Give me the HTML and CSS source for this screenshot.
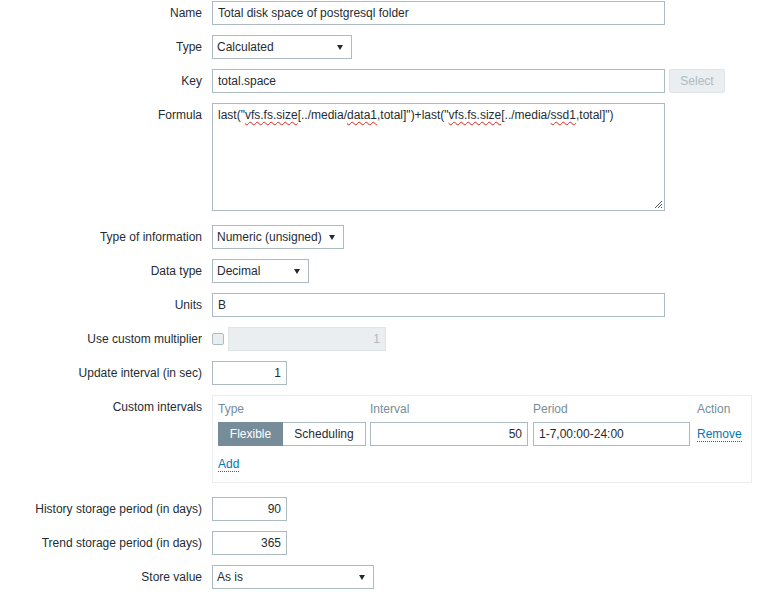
FILE: index.html
```html
<!DOCTYPE html>
<html lang="en">
<head>
    <meta charset="UTF-8">
    <title>Item</title>
    <link rel="stylesheet" href="styles.css">
</head>
<body>

  <form class="item-form">
      <label class="label">Name</label>
      <div class="field"><input class="text wide" type="text" value="Total disk space of postgresql folder"></div>

      <label class="label">Type</label>
      <div class="field"><div class="select w-type">Calculated</div></div>

      <label class="label">Key</label>
      <div class="field">
          <input class="text wide" type="text" value="total.space">
          <button type="button" class="btn-disabled">Select</button>
      </div>

      <label class="label">Formula</label>
      <div class="field tall">
          <div class="textarea">last("<span class="typo">vfs.fs.size</span>[../media/<span class="typo">data1</span>,total]")+last("<span class="typo">vfs.fs.size</span>[../media/<span class="typo">ssd1</span>,total]")
              <svg class="grip" width="9" height="9" viewBox="0 0 9 9"><path d="M8 1L1 8M8 4L4 8M8 7L7 8" stroke="#555" stroke-width="1"/></svg>
          </div>
      </div>

      <label class="label">Type of information</label>
      <div class="field"><div class="select w-info">Numeric (unsigned)</div></div>

      <label class="label">Data type</label>
      <div class="field"><div class="select w-data">Decimal</div></div>

      <label class="label">Units</label>
      <div class="field"><input class="text wide" type="text" value="B"></div>

      <label class="label">Use custom multiplier</label>
      <div class="field">
          <span class="checkbox"></span>
          <input class="text num w-mult" type="text" value="1" disabled>
      </div>

      <label class="label">Update interval (in sec)</label>
      <div class="field"><input class="text num w-short" type="text" value="1"></div>

      <label class="label">Custom intervals</label>
      <div class="field boxed">
          <div class="intervals">
              <div class="intervals-grid">
                  <div class="th">Type</div>
                  <div class="th">Interval</div>
                  <div class="th">Period</div>
                  <div class="th">Action</div>

                  <div class="seg">
                      <span class="seg-on">Flexible</span>
                      <span class="seg-off">Scheduling</span>
                  </div>
                  <div><input class="text num w-interval" type="text" value="50"></div>
                  <div><input class="text w-period" type="text" value="1-7,00:00-24:00"></div>
                  <div><a class="link" href="#">Remove</a></div>
              </div>
              <a class="link add" href="#">Add</a>
          </div>
      </div>

      <label class="label">History storage period (in days)</label>
      <div class="field"><input class="text num w-short" type="text" value="90"></div>

      <label class="label">Trend storage period (in days)</label>
      <div class="field"><input class="text num w-short" type="text" value="365"></div>

      <label class="label">Store value</label>
      <div class="field"><div class="select w-store">As is</div></div>
  </form>

</body>
</html>
```

FILE: styles.css
```css
body {
    margin: 0;
    background: #fff;
    color: #1f2c33;
    font-family: "Liberation Sans", Arial, sans-serif;
    font-size: 12px;
}

.item-form {
    display: grid;
    grid-template-columns: 202px 1fr;
    column-gap: 10px;
    row-gap: 10px;
    padding-top: 1px;
}

.label {
    text-align: right;
    line-height: 24px;
    align-self: start;
}

.field {
    display: flex;
    align-items: center;
    gap: 4px;
}

.field.tall,
.field.boxed {
    margin-bottom: 4px;
}

.text {
    box-sizing: border-box;
    height: 24px;
    padding: 0 5px;
    border: 1px solid #acbbc2;
    background: #fff;
    color: #1f2c33;
    font-family: inherit;
    font-size: 12px;
    outline: none;
}

.wide { width: 453px; }
.num { text-align: right; }
.w-short { width: 75px; }
.w-mult { width: 158px; }
.w-interval { width: 158px; }
.w-period { width: 157px; }

.text:disabled {
    background: #ebeef0;
    border-color: #dfe4e7;
    color: #acbbc2;
}

.btn-disabled {
    box-sizing: border-box;
    height: 24px;
    width: 56px;
    padding: 0;
    border: 1px solid #dfe4e7;
    border-radius: 2px;
    background: #ebeef0;
    color: #acbbc2;
    font-family: inherit;
    font-size: 12px;
}

.select {
    position: relative;
    box-sizing: border-box;
    height: 24px;
    line-height: 22px;
    padding: 0 4px;
    border: 1px solid #acbbc2;
    background: #fff;
}

    .select::after {
        content: "";
        position: absolute;
        right: 8px;
        top: 9px;
        border-left: 3px solid transparent;
        border-right: 3px solid transparent;
        border-top: 5px solid #1f2c33;
    }

.w-type { width: 140px; }
.w-info { width: 132px; }
.w-data { width: 97px; }
.w-store { width: 162px; }

.textarea {
    position: relative;
    box-sizing: border-box;
    width: 453px;
    height: 108px;
    padding: 4px 5px;
    border: 1px solid #acbbc2;
    line-height: 14px;
}

.typo {
    text-decoration: underline wavy #e0201c;
    text-decoration-thickness: 1px;
    text-underline-offset: 2px;
}

.grip {
    position: absolute;
    right: 1px;
    bottom: 1px;
}

.checkbox {
    box-sizing: border-box;
    width: 12px;
    height: 12px;
    border: 1px solid #acbbc2;
    border-radius: 2px;
    background: #ebeef0;
}

.intervals {
    box-sizing: border-box;
    width: 540px;
    height: 88px;
    padding: 5px;
    border: 1px solid #ebeef0;
}

.intervals-grid {
    display: grid;
    grid-template-columns: 152px 163px 164px auto;
    row-gap: 5px;
    align-items: center;
}

.th {
    line-height: 16px;
    color: #768d99;
}

.seg {
    display: flex;
    width: 148px;
    height: 24px;
    box-sizing: border-box;
}

    .seg span {
        box-sizing: border-box;
        height: 24px;
        line-height: 22px;
        text-align: center;
    }

.seg-on {
    width: 65px;
    border: 1px solid #768d99;
    background: #768d99;
    color: #fff;
}

.seg-off {
    width: 83px;
    border: 1px solid #acbbc2;
    border-left: none;
    background: #fff;
}

.link {
    color: #0275b8;
    text-decoration: none;
    border-bottom: 1px dotted #0275b8;
}

.add {
    display: inline-block;
    margin-top: 11px;
    line-height: 14px;
}
```
